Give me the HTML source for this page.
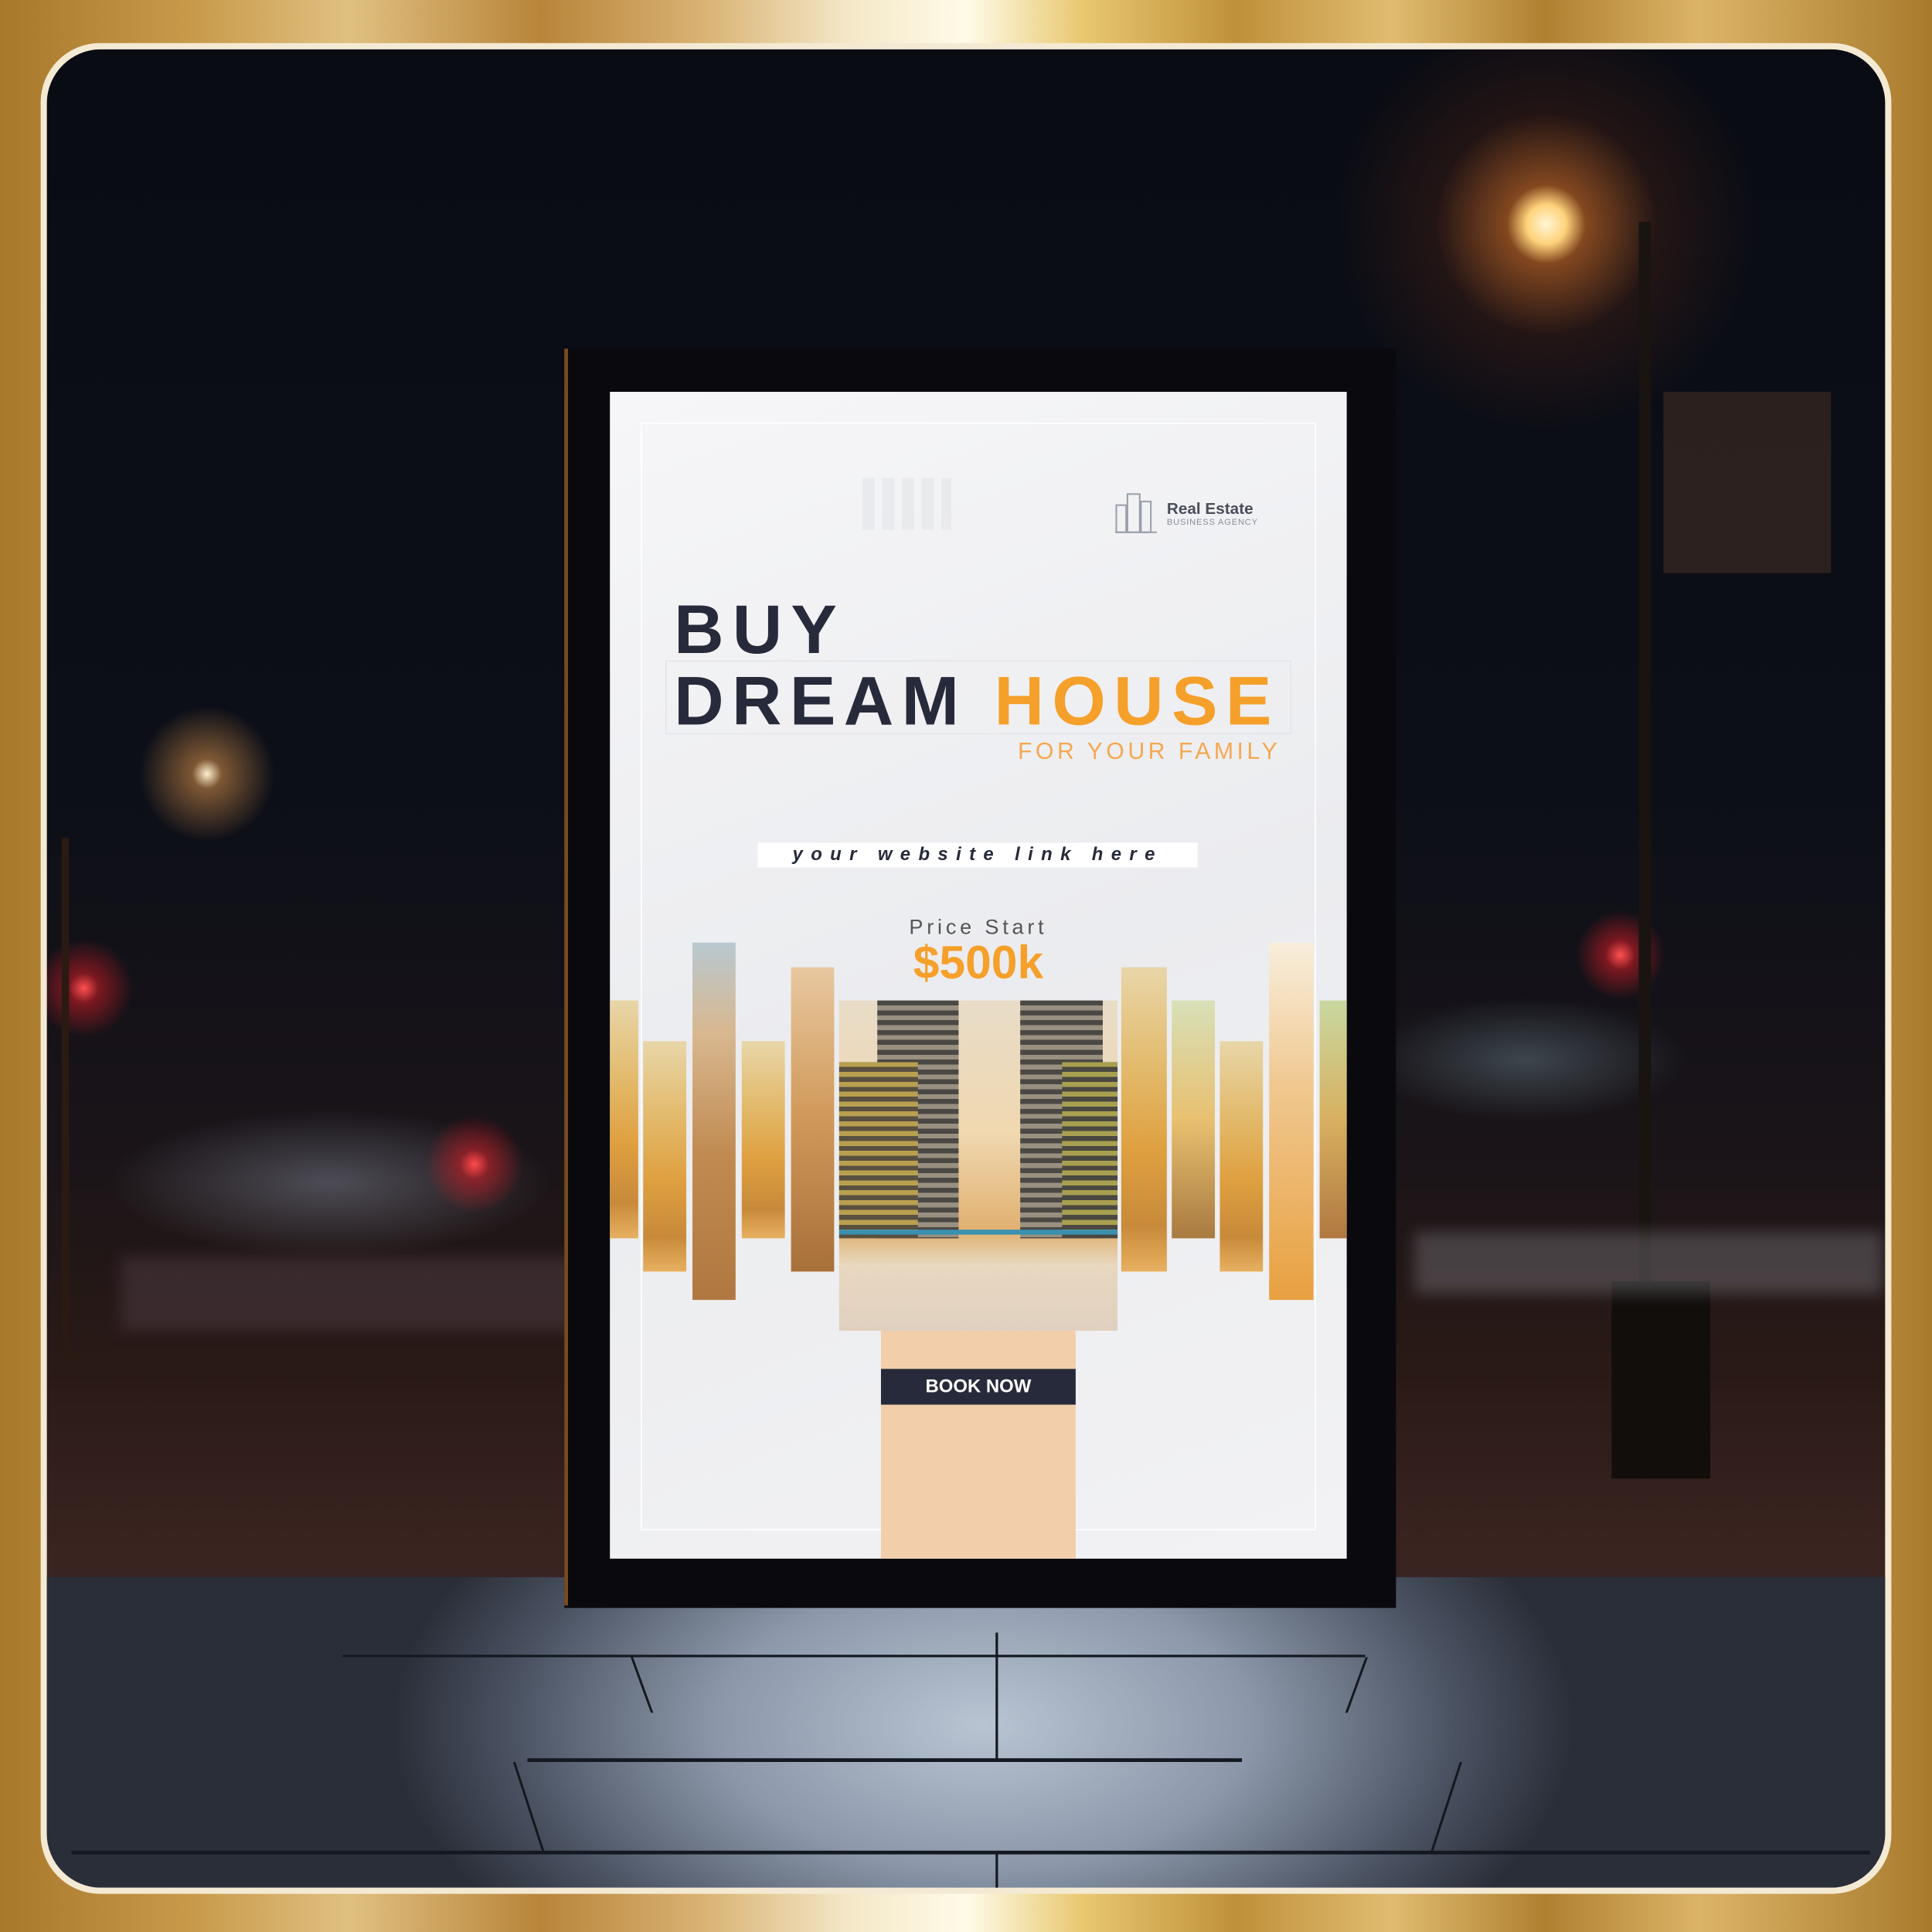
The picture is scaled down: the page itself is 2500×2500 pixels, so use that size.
<!DOCTYPE html>
<html><head><meta charset="utf-8"><style>
html,body{margin:0;padding:0;width:2500px;height:2500px;overflow:hidden;background:#b8862f}
#w{position:absolute;left:0;top:0;width:1568px;height:1568px;transform:scale(1.594388);transform-origin:0 0;overflow:hidden;
background:linear-gradient(90deg,#a8782a 0%,#c89a4a 10%,#e0c080 18%,#b8843a 28%,#d8b070 36%,#f4e8c8 44%,#fffbe8 50%,#e8c870 56%,#c0903a 64%,#e0bc70 72%,#b08030 80%,#dcb468 88%,#a87a2c 100%)}
.a{position:absolute}
#frame{left:33px;top:35px;width:1502px;height:1502px;border-radius:48px;background:#f4ead4}
#scene{left:38px;top:40px;width:1492px;height:1492px;border-radius:44px;overflow:hidden;
background:
radial-gradient(circle at 1217px 142px,#fff6d8 0,#ffd27a 16px,rgba(230,120,40,.55) 32px,rgba(120,50,20,.22) 90px,rgba(0,0,0,0) 170px),
radial-gradient(circle at 130px 588px,#fff0d0 0,rgba(240,160,80,.5) 12px,rgba(0,0,0,0) 55px),
radial-gradient(circle at 30px 762px,#ff5050 0,rgba(230,30,40,.5) 12px,rgba(0,0,0,0) 40px),
radial-gradient(circle at 347px 905px,#ff4a4a 0,rgba(230,30,40,.5) 12px,rgba(0,0,0,0) 40px),
radial-gradient(circle at 1277px 735px,#ff5050 0,rgba(230,30,40,.5) 12px,rgba(0,0,0,0) 36px),
radial-gradient(ellipse 180px 60px at 230px 920px,rgba(170,180,200,.35),rgba(0,0,0,0)),
radial-gradient(ellipse 130px 50px at 1200px 820px,rgba(150,190,200,.3),rgba(0,0,0,0)),
linear-gradient(180deg,#0a0c14 0%,#0c0f18 40%,#1a1418 60%,#2a1a16 72%,#3a2420 82%,#2a2428 90%,#1e2228 100%)}
#floor{left:0;top:1240px;width:1492px;height:252px;
background:radial-gradient(ellipse 480px 260px at 760px 120px,#b8c4d2 0,#8c98aa 45%,#4a5262 80%,#2a2e38 100%)}
.ln{position:absolute;background:#141820}
#box{left:458px;top:283px;width:675px;height:1022px;background:#0a0a0e}
#poster{left:495px;top:318px;width:598px;height:947px;background:linear-gradient(160deg,#f6f6f8,#ebecef 50%,#f2f2f4);overflow:hidden}
.s{position:absolute;background:linear-gradient(180deg,#e8d6a8 0%,#e2b868 35%,#dfa040 60%,#c88a3a 85%,#e7b060 100%)}
.t{font-family:"Liberation Sans",sans-serif;position:absolute;white-space:nowrap}
</style></head><body><div id="w">
<div class="a" id="frame"></div>
<div class="a" id="scene">
 <div class="a" style="left:1292px;top:140px;width:10px;height:1020px;background:#1a1410"></div>
 <div class="a" style="left:1270px;top:1000px;width:80px;height:160px;background:#120e0c"></div>
 <div class="a" style="left:1312px;top:278px;width:136px;height:147px;background:#3a2a22;opacity:.7"></div>
 <div class="a" style="left:12px;top:640px;width:6px;height:420px;background:#2a1a12"></div>
 <div class="a" style="left:60px;top:980px;width:380px;height:60px;background:rgba(90,70,80,.4);filter:blur(6px)"></div>
 <div class="a" style="left:1110px;top:960px;width:380px;height:50px;background:rgba(160,160,170,.3);filter:blur(6px)"></div>
 <div class="a" id="floor"></div>
 <div class="ln" style="left:390px;top:1387px;width:580px;height:3px"></div>
 <div class="ln" style="left:240px;top:1303px;width:830px;height:2px"></div>
 <div class="ln" style="left:770px;top:1285px;width:2px;height:105px"></div>
 <div class="ln" style="left:770px;top:1463px;width:2px;height:40px"></div>
 <div class="ln" style="left:20px;top:1462px;width:1460px;height:3px"></div>
 <div class="ln" style="left:482px;top:1305px;width:2px;height:45px;transform:skewX(20deg)"></div>
 <div class="ln" style="left:1062px;top:1305px;width:2px;height:45px;transform:skewX(-20deg)"></div>
 <div class="ln" style="left:390px;top:1390px;width:2px;height:72px;transform:skewX(18deg)"></div>
 <div class="ln" style="left:1135px;top:1390px;width:2px;height:72px;transform:skewX(-18deg)"></div>
</div>
<div class="a" id="box"></div>
<div class="a" style="left:458px;top:283px;width:3px;height:1020px;background:#7a4a20"></div>
<div class="a" id="poster">
 <div class="a" style="left:25px;top:25px;width:546px;height:897px;border:1px solid #fff"></div>
 <div class="s" style="left:0;top:494px;width:23px;height:193px"></div>
 <div class="s" style="left:27px;top:527px;width:35px;height:187px"></div>
 <div class="s" style="left:67px;top:447px;width:35px;height:290px;background:linear-gradient(180deg,#b8c8d0 0%,#d8b890 25%,#c08a50 60%,#b07840 100%)"></div>
 <div class="s" style="left:107px;top:527px;width:35px;height:160px"></div>
 <div class="s" style="left:147px;top:467px;width:35px;height:247px;background:linear-gradient(180deg,#e8c8a0,#d09858 50%,#a8703a 100%)"></div>
 <div class="s" style="left:186px;top:494px;width:226px;height:268px;background:linear-gradient(180deg,#e8dcc8 0%,#f0d8b0 40%,#e0b070 70%,#e8d8c0 80%,#e0d0c0 100%)">
  <div class="a" style="left:31px;top:0;width:66px;height:193px;background:repeating-linear-gradient(180deg,#4a4844 0 4px,#9a9080 4px 8px)"></div>
  <div class="a" style="left:147px;top:0;width:67px;height:193px;background:repeating-linear-gradient(180deg,#4a4844 0 4px,#9a9080 4px 8px)"></div>
  <div class="a" style="left:0;top:50px;width:64px;height:143px;background:repeating-linear-gradient(180deg,#b8a050 0 4px,#5a5040 4px 8px)"></div>
  <div class="a" style="left:181px;top:50px;width:45px;height:143px;background:repeating-linear-gradient(180deg,#a8a050 0 4px,#4a4840 4px 8px)"></div>
  <div class="a" style="left:0;top:186px;width:226px;height:4px;background:#3a90b0"></div>
 </div>
 <div class="s" style="left:415px;top:467px;width:37px;height:247px"></div>
 <div class="s" style="left:456px;top:494px;width:35px;height:193px;background:linear-gradient(180deg,#d8e0b8,#e8c070 50%,#a87a40 100%)"></div>
 <div class="s" style="left:495px;top:527px;width:35px;height:187px"></div>
 <div class="s" style="left:535px;top:447px;width:36px;height:290px;background:linear-gradient(180deg,#f8eedc,#f0c890 40%,#e8a040 100%)"></div>
 <div class="s" style="left:576px;top:494px;width:22px;height:193px;background:linear-gradient(180deg,#c8d8a0,#d8b060 50%,#b07840)"></div>
 <div class="a" style="left:220px;top:762px;width:158px;height:185px;background:#f2ceaa"></div>
 <div class="a" style="left:220px;top:793px;width:158px;height:29px;background:#272a3a"></div>
 <div class="t" style="left:220px;top:799px;width:158px;text-align:center;font-size:15px;font-weight:bold;color:#fff">BOOK NOW</div>
 <svg class="a" style="left:410px;top:80px" width="34" height="36" viewBox="0 0 34 36"><g fill="none" stroke="#9aa0aa" stroke-width="1.3"><rect x="1" y="12" width="8" height="22"/><rect x="10" y="3" width="10" height="31"/><rect x="21" y="9" width="8" height="25"/><line x1="0" y1="34" x2="34" y2="34"/></g></svg>
 <div class="t" style="left:452px;top:87px;font-size:13px;font-weight:bold;color:#4a4e5a">Real Estate</div>
 <div class="t" style="left:452px;top:103px;font-size:7px;color:#8a8e98;letter-spacing:.5px">BUSINESS AGENCY</div>
 <div class="a" style="left:205px;top:70px;width:72px;height:42px;background:repeating-linear-gradient(90deg,#e6e8ec 0 10px,transparent 10px 16px);opacity:.8"></div>
 <div class="t" style="left:52px;top:160px;font-size:56px;font-weight:bold;color:#272a3a;letter-spacing:7px">BUY</div>
 <div class="a" style="left:45px;top:218px;width:506px;height:58px;border:1px solid #e4e4e8"></div>
 <div class="t" style="left:52px;top:218px;font-size:56px;font-weight:bold;color:#272a3a;letter-spacing:6.5px">DREAM <span style="color:#f5a02a">HOUSE</span></div>
 <div class="t" style="left:331px;top:282px;font-size:19px;color:#f5a850;letter-spacing:2.8px">FOR YOUR FAMILY</div>
 <div class="a" style="left:120px;top:366px;width:357px;height:20px;background:#fff"></div>
 <div class="t" style="left:120px;top:367px;width:357px;text-align:center;font-size:15px;font-weight:bold;font-style:italic;color:#272a3a;letter-spacing:6.5px">your website link here</div>
 <div class="t" style="left:150px;top:425px;width:298px;text-align:center;font-size:17px;color:#555;letter-spacing:3px">Price Start</div>
 <div class="t" style="left:150px;top:443px;width:298px;text-align:center;font-size:38px;font-weight:bold;color:#f5a02a">$500k</div>
</div>
</div></body></html>
